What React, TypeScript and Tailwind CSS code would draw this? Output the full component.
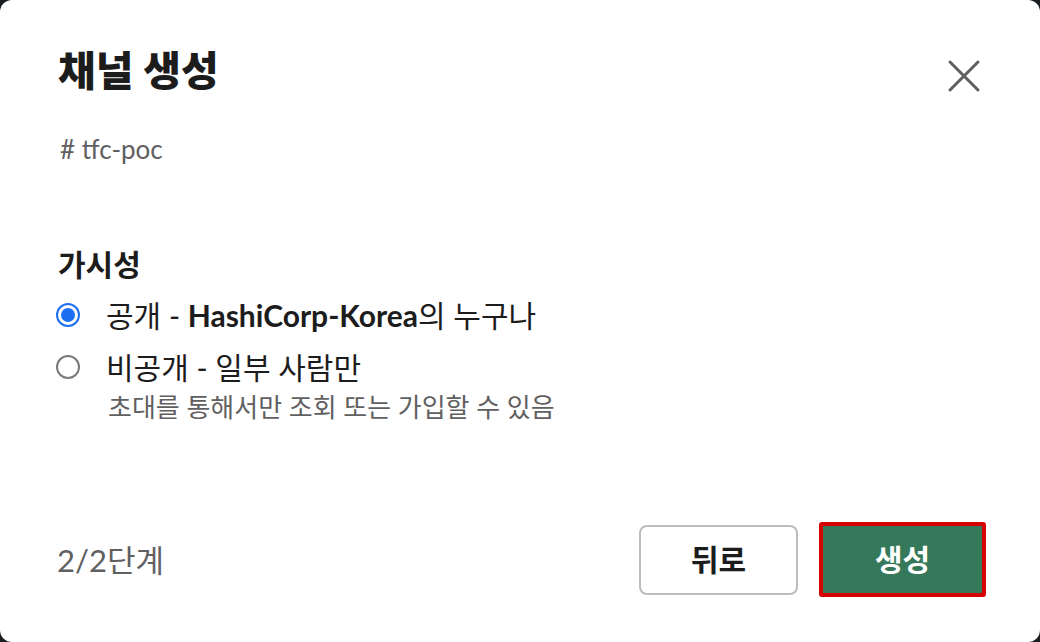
import { X } from "lucide-react";

const font = {
  fontFamily: '"Lato", "Noto Sans CJK KR", sans-serif',
};

function Radio({ checked }: { checked: boolean }) {
  return checked ? (
    <span className="-ml-[2px] flex h-[24px] w-[24px] shrink-0 items-center justify-center rounded-full border-[2px] border-[#1d6ff2] bg-white">
      <span className="h-[14px] w-[14px] rounded-full bg-[#1d6ff2]" />
    </span>
  ) : (
    <span className="-ml-[2px] h-[24px] w-[24px] shrink-0 rounded-full border-[2px] border-[#7a7a7a] bg-white" />
  );
}

export default function App() {
  return (
    <div className="h-[642px] w-[1040px] bg-[#1a1d21]" style={font}>
      <div className="flex h-full w-full flex-col rounded-[12px] bg-white pl-[58px] pr-[54px] pt-[46px] text-[#1d1c1d]">
        <div className="flex h-[50px] items-start justify-between">
          <h1 className="text-[41px] font-black leading-[50px]">채널 생성</h1>
          <button type="button" className="-mr-[6px] mt-[2px] text-[#616061]" aria-label="닫기">
            <X className="h-[56px] w-[56px]" strokeWidth={1.3} />
          </button>
        </div>

        <div className="ml-[2px] mt-[37px] text-[26px] leading-[32px] text-[#616061]"># tfc-poc</div>

        <div className="mt-[81px] text-[30px] font-bold leading-[36px]">가시성</div>

        <div className="mt-[13px] flex flex-col">
          <label className="flex h-[40px] items-center gap-[26px]">
            <Radio checked />
            <span className="text-[30px] leading-[38px]">
              공개 - <b className="font-bold">HashiCorp-Korea</b>의 누구나
            </span>
          </label>
          <label className="mt-[12px] flex h-[40px] items-center gap-[26px]">
            <Radio checked={false} />
            <span className="text-[30px] leading-[38px]">비공개 - 일부 사람만</span>
          </label>
          <div className="mt-[4px] pl-[50px] text-[26px] leading-[32px] text-[#616061]">
            초대를 통해서만 조회 또는 가입할 수 있음
          </div>
        </div>

        <div className="mt-auto mb-[45px] flex items-center justify-between">
          <span className="-ml-[1px] text-[31px] leading-[38px] text-[#616061]">2/2단계</span>
          <div className="flex items-center gap-[21px]">
            <button
              type="button"
              className="h-[70px] w-[159px] rounded-[8px] border-[2px] border-[#bcbcbc] bg-white text-[30px] font-bold text-[#1d1c1d]"
            >
              뒤로
            </button>
            <button
              type="button"
              className="h-[75px] w-[167px] rounded-[3px] border-[4px] border-[#d70000] bg-[#36785a] text-[30px] font-bold text-white"
            >
              생성
            </button>
          </div>
        </div>
      </div>
    </div>
  );
}
